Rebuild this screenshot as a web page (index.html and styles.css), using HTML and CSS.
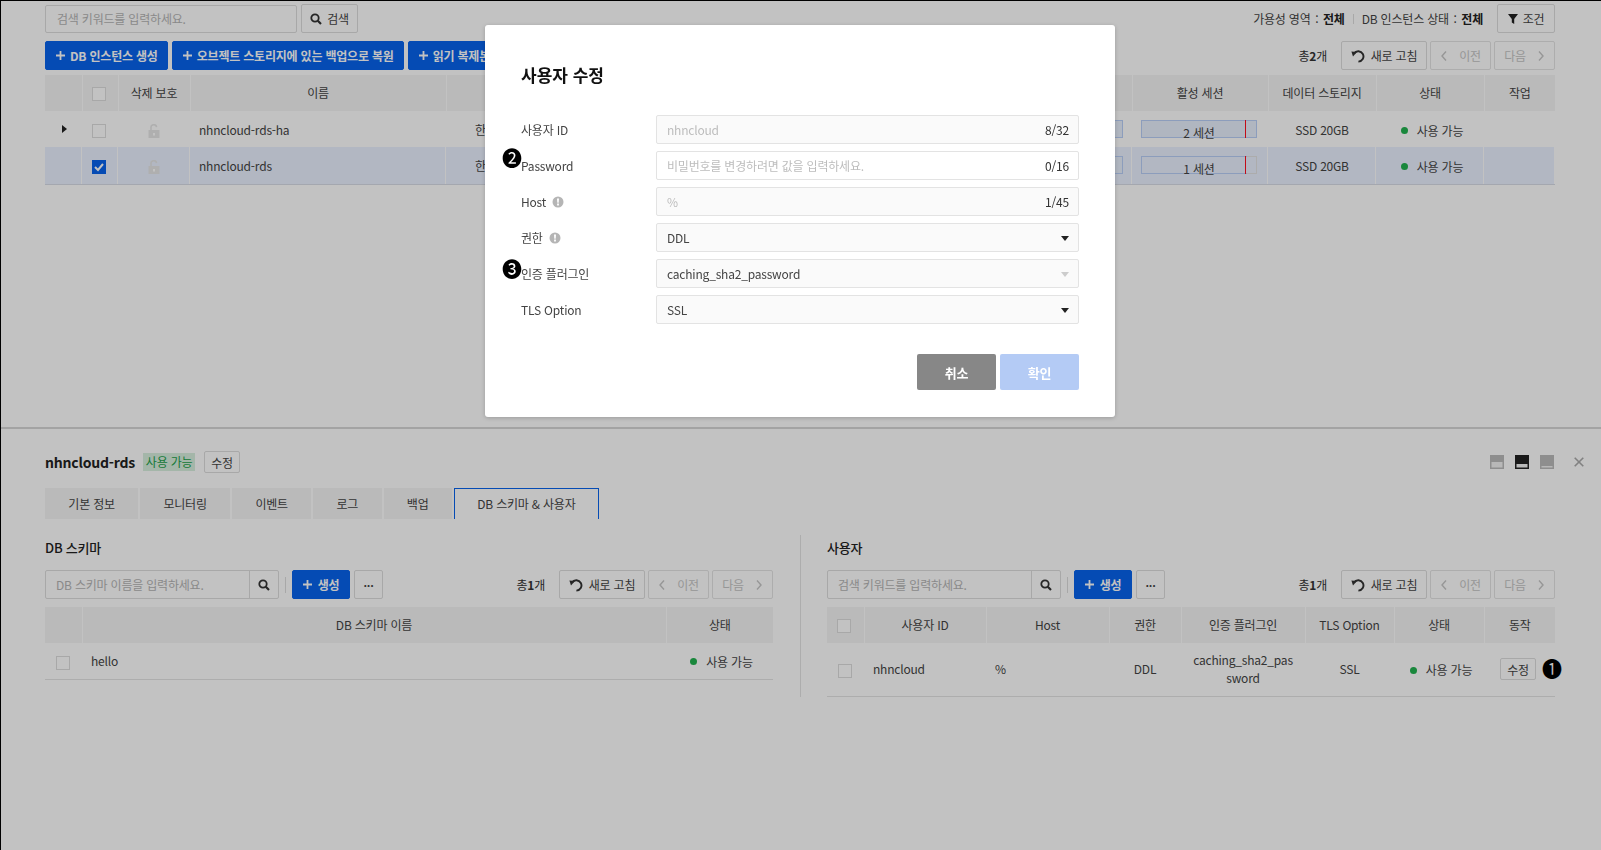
FILE: index.html
```html
<!DOCTYPE html>
<html lang="ko">
<head>
    <meta charset="UTF-8">
    <title>DB 인스턴스</title>
    <link rel="stylesheet" href="styles.css">
</head>
<body>
<svg class="sprite" xmlns="http://www.w3.org/2000/svg">
    <symbol id="i-plus" viewBox="0 0 10 10"><path d="M4 0h2v4h4v2H6v4H4V6H0V4h4z" fill="currentColor"/></symbol>
    <symbol id="i-search" viewBox="0 0 12 12"><circle cx="5" cy="5" r="3.7" fill="none" stroke="currentColor" stroke-width="1.8"/><path d="M7.8 7.8l3.2 3.2" stroke="currentColor" stroke-width="2.2"/></symbol>
    <symbol id="i-refresh" viewBox="0 0 14 14"><path d="M3 4.4A5.2 5.2 0 1 1 7.4 12.6" fill="none" stroke="currentColor" stroke-width="1.9"/><path d="M0.4 2.4l5.6 0.6-4 4.4z" fill="currentColor"/></symbol>
    <symbol id="i-left" viewBox="0 0 8 12"><path d="M6 1.5L2 6l4 4.5" fill="none" stroke="currentColor" stroke-width="1.4"/></symbol>
    <symbol id="i-right" viewBox="0 0 8 12"><path d="M2 1.5L6 6l-4 4.5" fill="none" stroke="currentColor" stroke-width="1.4"/></symbol>
    <symbol id="i-lock" viewBox="0 0 12 14"><path d="M3 6V3.8a2.8 2.8 0 0 1 5.6-.6" fill="none" stroke="currentColor" stroke-width="1.6"/><path d="M0.5 6h11v8h-11z" fill="currentColor"/><path d="M5 9h2v2.4H5z" fill="#fff"/></symbol>
    <symbol id="i-info" viewBox="0 0 12 12"><circle cx="6" cy="6" r="5.5" fill="#b5b5b5"/><path d="M5 2.6h2l-.3 4.2H5.3zM5.1 7.6h1.8v1.8H5.1z" fill="#fff"/></symbol>
</svg>

<div class="page">
    <section class="list-area">
        <div class="toolbar">
            <div class="search-input">검색 키워드를 입력하세요.</div>
            <button class="btn btn-search"><svg class="ico-12"><use href="#i-search"/></svg>검색</button>
            <div class="filter-text">
                <span>가용성 영역 <span class="colon">:</span> <b>전체</b></span>
                <i class="filter-sep"></i>
                <span>DB 인스턴스 상태 <span class="colon">:</span> <b>전체</b></span>
            </div>
            <button class="btn btn-cond"><svg class="ico-funnel" viewBox="0 0 10 10"><path d="M0 0h10L6.2 5v5L3.8 8.6V5z" fill="currentColor"/></svg>조건</button>
        </div>

        <div class="toolbar toolbar-actions">
            <button class="btn btn-primary"><svg class="ico-plus"><use href="#i-plus"/></svg>DB 인스턴스 생성</button>
            <button class="btn btn-primary"><svg class="ico-plus"><use href="#i-plus"/></svg>오브젝트 스토리지에 있는 백업으로 복원</button>
            <button class="btn btn-primary"><svg class="ico-plus"><use href="#i-plus"/></svg>읽기 복제본 생성</button>
            <div class="pager">
                <span class="total">총<b>2</b>개</span>
                <button class="btn btn-refresh"><svg class="ico-14"><use href="#i-refresh"/></svg>새로 고침</button>
                <button class="btn btn-page btn-off"><svg class="ico-chev"><use href="#i-left"/></svg>이전</button>
                <button class="btn btn-page btn-off">다음<svg class="ico-chev"><use href="#i-right"/></svg></button>
            </div>
        </div>

        <table class="grid grid-instances">
            <colgroup>
                <col class="w37"><col class="w36"><col class="w72"><col class="w256"><col class="w400"><col class="w286"><col class="w136"><col class="w108"><col class="w108"><col class="w71">
            </colgroup>
            <thead>
                <tr>
                    <th></th>
                    <th><span class="check"></span></th>
                    <th>삭제 보호</th>
                    <th>이름</th>
                    <th>가용성 영역</th>
                    <th>스토리지 사용량</th>
                    <th>활성 세션</th>
                    <th>데이터 스토리지</th>
                    <th>상태</th>
                    <th>작업</th>
                </tr>
            </thead>
            <tbody>
                <tr>
                    <td><span class="expander"></span></td>
                    <td class="center"><span class="check"></span></td>
                    <td class="center"><svg class="ico-lock"><use href="#i-lock"/></svg></td>
                    <td>nhncloud-rds-ha</td>
                    <td class="region">한국(판교) 리전</td>
                    <td><div class="bar bar-wide"></div></td>
                    <td><div class="bar"><span class="bar-fill bar-fill-full"></span><span class="bar-limit"></span><span class="bar-label">2 세션</span></div></td>
                    <td class="center">SSD 20GB</td>
                    <td class="center"><span class="status"><i class="dot"></i>사용 가능</span></td>
                    <td></td>
                </tr>
                <tr class="selected">
                    <td></td>
                    <td class="center"><span class="check checked"><svg viewBox="0 0 14 14"><path d="M3 7l3 3 5-6" fill="none" stroke="#fff" stroke-width="2"/></svg></span></td>
                    <td class="center"><svg class="ico-lock"><use href="#i-lock"/></svg></td>
                    <td>nhncloud-rds</td>
                    <td class="region">한국(판교) 리전</td>
                    <td><div class="bar bar-wide"></div></td>
                    <td><div class="bar"><span class="bar-fill"></span><span class="bar-limit"></span><span class="bar-label">1 세션</span></div></td>
                    <td class="center">SSD 20GB</td>
                    <td class="center"><span class="status"><i class="dot"></i>사용 가능</span></td>
                    <td></td>
                </tr>
            </tbody>
        </table>
    </section>

    <section class="detail-area">
        <div class="detail-head">
            <h3 class="detail-name">nhncloud-rds</h3>
            <span class="badge">사용 가능</span>
            <button class="btn btn-small">수정</button>
            <div class="win-icons">
                <svg class="win" viewBox="0 0 14 14"><rect width="14" height="14" fill="#bbb"/><rect x="1.5" y="7" width="11" height="5.5" fill="#f2f2f2"/></svg>
                <svg class="win" viewBox="0 0 14 14"><rect width="14" height="14" fill="#222"/><rect x="1.5" y="9" width="11" height="3.5" fill="#f2f2f2"/></svg>
                <svg class="win" viewBox="0 0 14 14"><rect width="14" height="14" fill="#bbb"/><rect x="1.5" y="11" width="11" height="1.5" fill="#f2f2f2"/></svg>
                <svg class="win-close" viewBox="0 0 10 10"><path d="M.7.7l8.6 8.6M9.3.7L.7 9.3" stroke="#aaa" stroke-width="1.6"/></svg>
            </div>
        </div>

        <div class="tabs">
            <div class="tab">기본 정보</div>
            <div class="tab">모니터링</div>
            <div class="tab">이벤트</div>
            <div class="tab">로그</div>
            <div class="tab">백업</div>
            <div class="tab tab-active">DB 스키마 &amp; 사용자</div>
        </div>

        <div class="panes">
            <div class="pane pane-left">
                <h4 class="pane-title">DB 스키마</h4>
                <div class="toolbar">
                    <div class="search-group">
                        <div class="search-field">DB 스키마 이름을 입력하세요.</div>
                        <div class="search-btn"><svg class="ico-12"><use href="#i-search"/></svg></div>
                    </div>
                    <i class="tool-sep"></i>
                    <button class="btn btn-primary btn-create"><svg class="ico-plus"><use href="#i-plus"/></svg>생성</button>
                    <button class="btn btn-more">···</button>
                    <div class="pager">
                        <span class="total">총<b>1</b>개</span>
                        <button class="btn btn-refresh"><svg class="ico-14"><use href="#i-refresh"/></svg>새로 고침</button>
                        <button class="btn btn-page btn-off"><svg class="ico-chev"><use href="#i-left"/></svg>이전</button>
                        <button class="btn btn-page btn-off">다음<svg class="ico-chev"><use href="#i-right"/></svg></button>
                    </div>
                </div>
                <table class="grid grid-lower">
                    <colgroup><col class="w37"><col class="w584"><col class="w107"></colgroup>
                    <thead>
                        <tr><th></th><th>DB 스키마 이름</th><th>상태</th></tr>
                    </thead>
                    <tbody>
                        <tr>
                            <td class="center"><span class="check"></span></td>
                            <td>hello</td>
                            <td class="center"><span class="status"><i class="dot"></i>사용 가능</span></td>
                        </tr>
                    </tbody>
                </table>
            </div>

            <div class="pane pane-right">
                <h4 class="pane-title">사용자</h4>
                <div class="toolbar">
                    <div class="search-group">
                        <div class="search-field">검색 키워드를 입력하세요.</div>
                        <div class="search-btn"><svg class="ico-12"><use href="#i-search"/></svg></div>
                    </div>
                    <i class="tool-sep"></i>
                    <button class="btn btn-primary btn-create"><svg class="ico-plus"><use href="#i-plus"/></svg>생성</button>
                    <button class="btn btn-more">···</button>
                    <div class="pager">
                        <span class="total">총<b>1</b>개</span>
                        <button class="btn btn-refresh"><svg class="ico-14"><use href="#i-refresh"/></svg>새로 고침</button>
                        <button class="btn btn-page btn-off"><svg class="ico-chev"><use href="#i-left"/></svg>이전</button>
                        <button class="btn btn-page btn-off">다음<svg class="ico-chev"><use href="#i-right"/></svg></button>
                    </div>
                </div>
                <table class="grid grid-lower">
                    <colgroup><col class="w37"><col class="w122"><col class="w123"><col class="w72"><col class="w124"><col class="w89"><col class="w90"><col class="w71"></colgroup>
                    <thead>
                        <tr><th><span class="check"></span></th><th>사용자 ID</th><th>Host</th><th>권한</th><th>인증 플러그인</th><th>TLS Option</th><th>상태</th><th>동작</th></tr>
                    </thead>
                    <tbody>
                        <tr class="row-tall">
                            <td class="center"><span class="check"></span></td>
                            <td>nhncloud</td>
                            <td>%</td>
                            <td class="center">DDL</td>
                            <td class="center break">caching_sha2_password</td>
                            <td class="center">SSL</td>
                            <td class="center"><span class="status"><i class="dot"></i>사용 가능</span></td>
                            <td class="center action"><button class="btn btn-small">수정</button><span class="marker marker-1">❶</span></td>
                        </tr>
                    </tbody>
                </table>
            </div>
        </div>
    </section>
</div>

<div class="overlay"></div>

<div class="modal">
    <h2 class="modal-title">사용자 수정</h2>
    <div class="form">
        <div class="form-row">
            <label class="form-label">사용자 ID</label>
            <div class="field field-off"><span class="hint">nhncloud</span><span class="count">8/32</span></div>
        </div>
        <div class="form-row">
            <span class="marker marker-2">❷</span>
            <label class="form-label">Password</label>
            <div class="field"><span class="hint">비밀번호를 변경하려면 값을 입력하세요.</span><span class="count">0/16</span></div>
        </div>
        <div class="form-row">
            <label class="form-label">Host<svg class="ico-info"><use href="#i-info"/></svg></label>
            <div class="field field-off"><span class="hint">%</span><span class="count">1/45</span></div>
        </div>
        <div class="form-row">
            <label class="form-label">권한<svg class="ico-info"><use href="#i-info"/></svg></label>
            <div class="field field-off"><span>DDL</span><i class="caret"></i></div>
        </div>
        <div class="form-row">
            <span class="marker marker-3">❸</span>
            <label class="form-label">인증 플러그인</label>
            <div class="field field-off"><span>caching_sha2_password</span><i class="caret caret-off"></i></div>
        </div>
        <div class="form-row">
            <label class="form-label">TLS Option</label>
            <div class="field field-off"><span>SSL</span><i class="caret"></i></div>
        </div>
    </div>
    <div class="modal-foot">
        <button class="modal-btn modal-cancel">취소</button>
        <button class="modal-btn modal-ok">확인</button>
    </div>
</div>
</body>
</html>
```

FILE: styles.css
```css
* { box-sizing: border-box; }
html, body { margin: 0; padding: 0; }
body { width: 1601px; height: 850px; overflow: hidden; background: #fff; color: #444; font-family: "Noto Sans CJK KR", "Noto Sans", sans-serif; font-size: 12px; letter-spacing: -0.2px; }
h2, h3, h4 { margin: 0; }
button { font-family: inherit; letter-spacing: inherit; cursor: pointer; }
.sprite { display: none; }

/* buttons */
.btn { display: inline-flex; align-items: center; justify-content: center; height: 29px; padding: 0 12px; border: 1px solid #ddd; border-radius: 2px; background: #fff; color: #444; font-size: 12px; white-space: nowrap; }
.btn-primary { background: #0763ed; border-color: #0763ed; color: #fff; font-weight: 700; padding: 0 9px 0 10px; }
.btn-search { width: 57px; margin-left: 4px; padding: 0; }
.btn-search svg { margin-right: 5px; color: #333; }
.btn-cond { width: 58px; padding: 0; margin-left: 14px; }
.btn-refresh { width: 86px; padding: 0; }
.btn-refresh svg { margin-right: 6px; color: #333; }
.btn-page { width: 61px; padding: 0; gap: 11px; }
.btn-off { color: #c6c6c6; border-color: #e4e4e4; }
.btn-small { height: 22px; width: 36px; padding: 0; }
.action .btn-small { margin-left: -3px; }
.btn-create { width: 58px; padding: 0; gap: 4px; }
.btn-more { width: 29px; padding: 0; margin-left: 4px; font-weight: 700; font-size: 11px; }

.ico-12 { width: 12px; height: 12px; }
.ico-14 { width: 14px; height: 14px; }
.ico-plus { width: 9px; height: 9px; margin-right: 5px; }
.btn-create .ico-plus { margin-right: 2px; }
.ico-funnel { width: 10px; height: 10px; margin-right: 5px; color: #222; }
.ico-chev { width: 8px; height: 12px; }
.ico-lock { width: 12px; height: 14px; color: #e6e6e6; vertical-align: middle; }
.ico-info { width: 12px; height: 12px; margin-left: 6px; }

/* top list */
.list-area { height: 429px; padding: 4px 46px 0 45px; border-bottom: 2px solid #d6d6d6; }
.toolbar { display: flex; align-items: center; height: 29px; }
.toolbar-actions { margin-top: 8px; margin-bottom: 5px; gap: 4px; }
.search-input { width: 252px; height: 28px; padding-left: 11px; border: 1px solid #ddd; border-radius: 2px; line-height: 26px; color: #b5b5b5; }
.filter-text { display: flex; align-items: center; margin-left: auto; color: #444; }
.filter-text b { color: #222; }
.colon { margin: 0 1.5px; }
.filter-sep { width: 1px; height: 10px; margin: 0 8px; background: #ddd; }
.pager { display: flex; align-items: center; margin-left: auto; gap: 3px; }
.total { margin-right: 11px; color: #333; }
.total b { font-weight: 700; }

/* tables */
.grid { width: 100%; border-collapse: collapse; table-layout: fixed; }
.grid th { height: 36px; padding: 0 0 1px; background: #f5f5f5; border-right: 1px solid #fff; font-weight: 400; color: #444; text-align: center; }
.grid th:last-child { border-right: 0; }
.grid td { height: 36px; padding: 0 9px; border-bottom: 1px solid #e4e4e4; color: #444; }
.grid .region { padding-left: 29px; white-space: nowrap; }
.grid .break { padding: 0 11px; word-break: break-all; }
.grid-instances tbody tr:first-child td { border-bottom: 0; }
.selected td { background: #eaf1ff; box-shadow: inset -1px 0 0 #fff; }
.grid-instances .selected td { height: 37px; border-bottom: 1px solid #d8dce6; }
.row-tall td { height: 53px; line-height: 18px; }
.center { text-align: center; }
.w37 { width: 37px; } .w36 { width: 36px; } .w72 { width: 72px; } .w256 { width: 256px; } .w400 { width: 400px; } .w286 { width: 286px; } .w136 { width: 136px; } .w108 { width: 108px; } .w71 { width: 71px; } .w584 { width: 584px; } .w107 { width: 107px; } .w122 { width: 122px; } .w123 { width: 123px; } .w124 { width: 124px; } .w89 { width: 89px; } .w90 { width: 90px; }
.check { display: inline-block; width: 14px; height: 14px; margin-left: -2px; border: 1px solid #ddd; background: #fff; vertical-align: middle; }
.checked { background: #0763ed; border-color: #0763ed; }
.checked svg { display: block; width: 14px; height: 14px; margin: -1px; }
.expander { display: block; width: 0; height: 0; margin-left: 8px; border-left: 5px solid #222; border-top: 4px solid transparent; border-bottom: 4px solid transparent; }
.status { display: inline-flex; align-items: center; gap: 9px; padding-left: 4px; }
.dot { width: 7px; height: 7px; border-radius: 50%; background: #22b24f; }

.bar { position: relative; width: 116px; height: 18px; border: 1px solid #e2e2e2; text-align: center; line-height: 18px; }
.bar-wide { width: 200px; margin-left: auto; border-color: #b9cff7; background: #e8effd; }
.bar-fill { position: absolute; left: -1px; top: -1px; width: 106px; height: 18px; border: 1px solid #b9cff7; border-right: 0; background: #e8effd; }
.selected .bar-fill { background: #eaf1ff; }
.bar-fill-full { width: 116px; border-right: 1px solid #b9cff7; }
.bar-limit { position: absolute; top: -1px; right: 10px; width: 1px; height: 18px; background: #ff1020; }
.bar-label { position: relative; top: 3px; }

/* detail */
.detail-area { padding: 0 46px 0 45px; }
.detail-head { display: flex; align-items: center; height: 22px; margin-top: 22px; }
.detail-name { font-size: 14px; font-weight: 700; color: #222; }
.badge { height: 18px; width: 52px; margin: 0 9px 0 8px; background: #d8f0df; color: #22a04a; text-align: center; line-height: 18px; font-size: 12px; }
.win-icons { display: flex; align-items: center; gap: 11px; margin-left: auto; margin-right: -29px; }
.win { width: 14px; height: 14px; }
.win-close { width: 10px; height: 10px; margin-left: 9px; }

.tabs { display: flex; gap: 2px; height: 31px; margin-top: 15px; }
.tab { height: 31px; padding: 0 23.3px; background: #f5f5f5; line-height: 31px; color: #444; }
.tab-active { padding: 0 22.5px; background: #fff; border: 1px solid #0763ed; border-bottom: 0; line-height: 30px; }

.panes { display: flex; margin-top: 16px; }
.pane { width: 728px; flex: none; }
.pane-left { margin-right: 27px; }
.pane-right { width: 755px; padding-left: 26px; border-left: 1px solid #e4e4e4; height: 162px; }
.pane-title { height: 26px; margin-bottom: 9px; font-size: 13px; font-weight: 500; line-height: 26px; color: #222; }
.pane .toolbar { margin-bottom: 8px; }
.search-group { display: flex; width: 234px; height: 29px; border: 1px solid #ddd; border-radius: 2px; }
.search-field { flex: 1; padding-left: 10px; line-height: 27px; color: #b5b5b5; }
.search-btn { display: flex; align-items: center; justify-content: center; width: 29px; border-left: 1px solid #ddd; color: #333; }
.tool-sep { width: 1px; height: 16px; margin: 0 6px; background: #ddd; }
.action { position: relative; }

/* callouts sit over everything else */
.marker { position: absolute; width: 20px; font-family: "Noto Sans CJK KR", sans-serif; font-size: 20px; line-height: 20px; letter-spacing: 0; text-align: center; color: #000; }
.marker-1 { left: 58px; top: 16px; }
.marker-2 { left: -19px; top: -3px; }
.marker-3 { left: -19px; top: 0; }

/* modal */
.overlay { position: fixed; inset: 0; background: rgba(0, 0, 0, 0.24); box-shadow: inset 1px 1px 0 #000; }
.modal { position: absolute; left: 485px; top: 25px; width: 630px; height: 392px; padding: 37px 36px 0 36px; background: #fff; border-radius: 3px; box-shadow: 0 1px 4px rgba(0, 0, 0, 0.2); }
.modal-title { height: 26px; font-size: 17px; font-weight: 700; line-height: 26px; color: #111; letter-spacing: 0; }
.form { display: flex; flex-direction: column; gap: 7px; margin-top: 27px; }
.form-row { position: relative; display: flex; align-items: center; height: 29px; }
.form-label { display: flex; align-items: center; width: 135px; color: #444; }
.field { display: flex; align-items: center; justify-content: space-between; width: 423px; height: 29px; padding: 0 9px 0 10px; border: 1px solid #e3e3e3; border-radius: 2px; background: #fff; color: #444; }
.field-off { background: #fafafa; }
.hint { color: #bdbdbd; }
.count { color: #333; }
.caret { width: 0; height: 0; margin-top: 1px; border-top: 5px solid #222; border-left: 4px solid transparent; border-right: 4px solid transparent; }
.caret-off { border-top-color: #ccc; }
.modal-foot { display: flex; justify-content: flex-end; gap: 4px; margin-top: 30px; }
.modal-btn { width: 79px; height: 36px; border: 0; border-radius: 2px; color: #fff; font-size: 13px; font-weight: 700; }
.modal-cancel { background: #878787; }
.modal-ok { background: #b4cbf5; }
```
